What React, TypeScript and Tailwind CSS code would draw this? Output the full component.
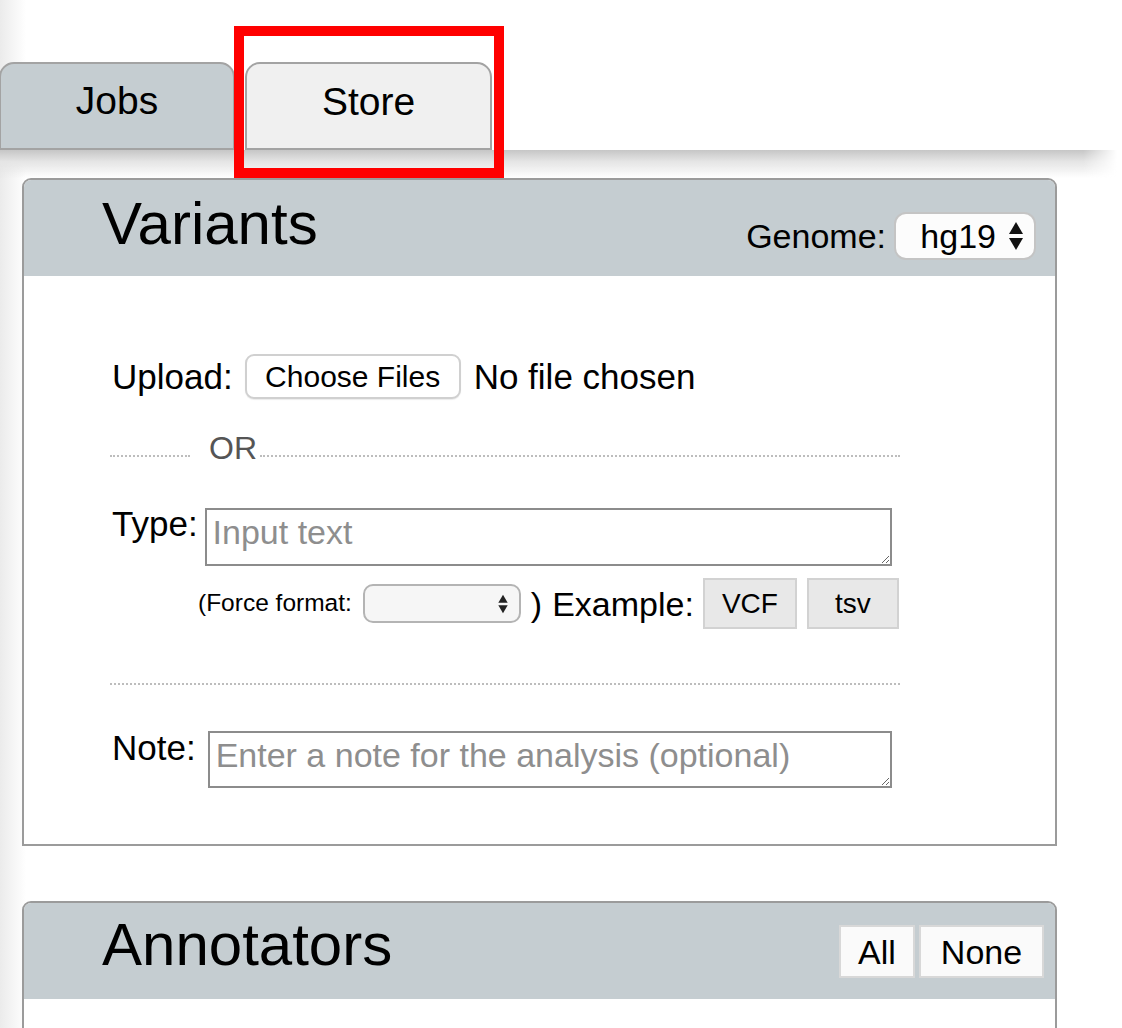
import React from "react";

function UpDown({ className }: { className?: string }) {
  return (
    <svg viewBox="0 0 16 30" className={className}>
      <path d="M8 1 L15 13 H1 Z" fill="currentColor" />
      <path d="M8 29 L15 17 H1 Z" fill="currentColor" />
    </svg>
  );
}

function Panel({
  title,
  titleTop,
  right,
  children,
}: {
  title: string;
  titleTop: string;
  right: React.ReactNode;
  children: React.ReactNode;
}) {
  return (
    <section className="ml-[22px] w-[1035px] rounded-t-[9px] border-2 border-[#9b9b9b] bg-white overflow-hidden">
      <div className="flex h-[96px] items-start justify-between bg-[#c5cdd1]">
        <h2 className={`${titleTop} ml-[78px] text-[60px] leading-none text-black`}>{title}</h2>
        {right}
      </div>
      {children}
    </section>
  );
}

export default function App() {
  return (
    <div className="relative min-h-screen overflow-hidden bg-[linear-gradient(to_right,#ebebeb_0px,#ffffff_26px)] font-['Liberation_Sans',Arial,sans-serif] text-black">
      {/* tab bar */}
      <div className="flex w-[1115px] items-end gap-[10px] pt-[62px]">
        <div className="flex h-[88px] w-[236px] -ml-[1px] items-center justify-center rounded-t-[15px] border-2 border-[#a3a3a3] bg-[#c5cdd1] pb-[10px] text-[39px]">
          Jobs
        </div>
        <div className="flex h-[88px] w-[247px] items-center justify-center rounded-t-[15px] border-2 border-[#a3a3a3] bg-[#f0f0f0] pb-[8px] text-[39px]">
          Store
        </div>
      </div>
      {/* shadow under the tab bar */}
      <div className="h-[28px] w-[1117px] bg-[linear-gradient(to_bottom,#c6c6c6,#e4e4e4_40%,rgba(255,255,255,0))] [mask-image:linear-gradient(to_right,#000_97%,transparent)]" />

      <div>
        <Panel
          title="Variants"
          titleTop="mt-[14px]"
          right={
            <div className="mt-[32px] mr-[19px] flex items-center gap-[8px]">
              <span className="text-[34px] leading-none">Genome:</span>
              <div className="flex h-[48px] w-[142px] items-center justify-end gap-[12px] rounded-[12px] border-2 border-[#c4c4c4] bg-[#fcfcfc] pr-[10px]">
                <span className="text-[34px] leading-none">hg19</span>
                <UpDown className="h-[30px] w-[16px] text-[#111]" />
              </div>
            </div>
          }
        >
          <div className="pl-[86px] pt-[78px] pb-[56px]">
            {/* upload */}
            <div className="flex h-[45px] items-center pl-[2px]">
              <span className="text-[35px] leading-none">Upload:</span>
              <button className="ml-[12px] h-[45px] w-[216px] rounded-[9px] border-2 border-[#d0d0d0] bg-white text-[30px] leading-none shadow-[0_1px_1px_rgba(0,0,0,0.08)]">
                Choose Files
              </button>
              <span className="ml-[13px] text-[35px] leading-none">No file chosen</span>
            </div>

            {/* OR */}
            <div className="mt-[33px] flex h-[32px] w-[790px] items-end">
              <span className="mb-[7px] w-[80px] border-b-2 border-dotted border-[#bdbdbd]" />
              <span className="ml-[19px] mr-[3px] text-[32px] leading-none text-[#555]">OR</span>
              <span className="mb-[7px] flex-1 border-b-2 border-dotted border-[#bdbdbd]" />
            </div>

            {/* type */}
            <div className="mt-[42px] flex items-start pl-[2px]">
              <span className="text-[35px] leading-none">Type:</span>
              <textarea
                placeholder="Input text"
                className="ml-[7px] mt-[2px] h-[58px] w-[687px] border-2 border-[#8c8c8c] bg-white px-[6px] py-[2px] text-[34px] leading-[1.2] placeholder:text-[#8e8e8e] outline-none"
              />
            </div>

            {/* force format */}
            <div className="mt-[12px] ml-[88px] flex h-[51px] items-center">
              <span className="text-[24.5px] leading-none">(Force format:</span>
              <div className="ml-[11px] flex h-[39px] w-[158px] items-center justify-end rounded-[10px] border-2 border-[#b4b4b4] bg-[#f6f6f6] pr-[10px]">
                <UpDown className="h-[20px] w-[12px] text-[#222]" />
              </div>
              <span className="ml-[10px] text-[34px] leading-none">)</span>
              <span className="ml-[10px] text-[34px] leading-none">Example:</span>
              <button className="ml-[9px] h-[51px] w-[94px] border-2 border-[#d2d2d2] bg-[#e8e8e8] text-[28px] leading-none">
                VCF
              </button>
              <button className="ml-[10px] h-[51px] w-[92px] border-2 border-[#d2d2d2] bg-[#e8e8e8] text-[28px] leading-none">
                tsv
              </button>
            </div>

            <div className="mt-[54px] w-[790px] border-t-2 border-dotted border-[#bdbdbd]" />

            {/* note */}
            <div className="mt-[45px] flex items-start pl-[2px]">
              <span className="text-[35px] leading-none">Note:</span>
              <textarea
                placeholder="Enter a note for the analysis (optional)"
                className="ml-[12px] mt-[1px] h-[57px] w-[684px] border-2 border-[#8c8c8c] bg-white px-[6px] py-[2px] text-[34px] leading-[1.2] placeholder:text-[#8e8e8e] outline-none"
              />
            </div>
          </div>
        </Panel>

        <div className="mt-[55px]">
          <Panel
            title="Annotators"
            titleTop="mt-[12px]"
            right={
              <div className="mt-[22px] mr-[11px] flex gap-[4px]">
                <button className="h-[53px] w-[76px] border-2 border-[#d8d8d8] bg-[#fafafa] text-[34px] leading-none">
                  All
                </button>
                <button className="h-[53px] w-[125px] border-2 border-[#d8d8d8] bg-[#fafafa] text-[34px] leading-none">
                  None
                </button>
              </div>
            }
          >
            <div className="h-[200px]" />
          </Panel>
        </div>
      </div>

      {/* highlight annotation */}
      <div className="pointer-events-none absolute left-[234px] top-[26px] h-[152px] w-[270px] border-[10px] border-[#ff0000]" />
    </div>
  );
}
